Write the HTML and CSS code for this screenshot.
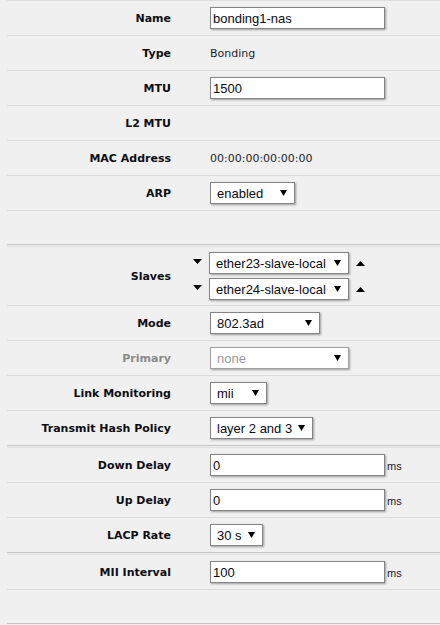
FILE: index.html
```html
<!DOCTYPE html>
<html>
<head>
<meta charset="utf-8">
<link rel="stylesheet" href="styles.css">
</head>
<body>
<div class="form">
  <div class="section">
    <div class="row">
      <div class="label">Name</div>
      <div class="value"><input class="text" type="text" value="bonding1-nas"></div>
    </div>
    <div class="row">
      <div class="label">Type</div>
      <div class="value"><span class="static">Bonding</span></div>
    </div>
    <div class="row">
      <div class="label">MTU</div>
      <div class="value"><input class="text" type="text" value="1500"></div>
    </div>
    <div class="row">
      <div class="label">L2 MTU</div>
      <div class="value"></div>
    </div>
    <div class="row">
      <div class="label">MAC Address</div>
      <div class="value"><span class="static">00:00:00:00:00:00</span></div>
    </div>
    <div class="row">
      <div class="label">ARP</div>
      <div class="value">
        <div class="select w-arp"><span>enabled</span><svg class="caret" width="7" height="6" viewBox="0 0 7 6"><polygon points="0,0 7,0 3.5,6"/></svg></div>
      </div>
    </div>
    <div class="row empty"></div>
  </div>

  <div class="section">
    <div class="row slaves">
      <div class="label">Slaves</div>
      <div class="value list">
        <div class="slave">
          <svg class="arrow" width="9" height="5" viewBox="0 0 9 5"><polygon points="0,0 9,0 4.5,5"/></svg>
          <div class="select w-slave"><span>ether23-slave-local</span><svg class="caret" width="7" height="6" viewBox="0 0 7 6"><polygon points="0,0 7,0 3.5,6"/></svg></div>
          <svg class="arrow up" width="9" height="5" viewBox="0 0 9 5"><polygon points="0,5 9,5 4.5,0"/></svg>
        </div>
        <div class="slave">
          <svg class="arrow" width="9" height="5" viewBox="0 0 9 5"><polygon points="0,0 9,0 4.5,5"/></svg>
          <div class="select w-slave"><span>ether24-slave-local</span><svg class="caret" width="7" height="6" viewBox="0 0 7 6"><polygon points="0,0 7,0 3.5,6"/></svg></div>
          <svg class="arrow up" width="9" height="5" viewBox="0 0 9 5"><polygon points="0,5 9,5 4.5,0"/></svg>
        </div>
      </div>
    </div>
    <div class="row">
      <div class="label">Mode</div>
      <div class="value">
        <div class="select w-mode"><span>802.3ad</span><svg class="caret" width="7" height="6" viewBox="0 0 7 6"><polygon points="0,0 7,0 3.5,6"/></svg></div>
      </div>
    </div>
    <div class="row disabled">
      <div class="label">Primary</div>
      <div class="value">
        <div class="select w-primary"><span>none</span><svg class="caret" width="7" height="6" viewBox="0 0 7 6"><polygon points="0,0 7,0 3.5,6"/></svg></div>
      </div>
    </div>
    <div class="row">
      <div class="label">Link Monitoring</div>
      <div class="value">
        <div class="select w-link"><span>mii</span><svg class="caret" width="7" height="6" viewBox="0 0 7 6"><polygon points="0,0 7,0 3.5,6"/></svg></div>
      </div>
    </div>
    <div class="row">
      <div class="label">Transmit Hash Policy</div>
      <div class="value">
        <div class="select w-hash"><span>layer 2 and 3</span><svg class="caret" width="7" height="6" viewBox="0 0 7 6"><polygon points="0,0 7,0 3.5,6"/></svg></div>
      </div>
    </div>
  </div>

  <div class="section">
    <div class="row">
      <div class="label">Down Delay</div>
      <div class="value unit-field"><input class="text" type="text" value="0"><span class="unit">ms</span></div>
    </div>
    <div class="row">
      <div class="label">Up Delay</div>
      <div class="value unit-field"><input class="text" type="text" value="0"><span class="unit">ms</span></div>
    </div>
    <div class="row">
      <div class="label">LACP Rate</div>
      <div class="value">
        <div class="select w-lacp"><span>30 s</span><svg class="caret" width="7" height="6" viewBox="0 0 7 6"><polygon points="0,0 7,0 3.5,6"/></svg></div>
      </div>
    </div>
  </div>

  <div class="section">
    <div class="row">
      <div class="label">MII Interval</div>
      <div class="value unit-field"><input class="text" type="text" value="100"><span class="unit">ms</span></div>
    </div>
    <div class="row empty"></div>
  </div>
</div>
</body>
</html>
```

FILE: styles.css
```css
html, body {
  margin: 0;
  padding: 0;
}

body {
  background: #f0f0f0;
  font-family: "DejaVu Sans", Verdana, sans-serif;
  font-size: 11px;
  color: #111;
}

.form {
  margin-left: 7px;
}

.section {
  border-top: 1px solid #dedede;
  border-bottom: 1px solid #c4c4c4;
}

.section + .section {
  margin-top: 1px;
}

.row {
  display: grid;
  grid-template-columns: 164px 1fr;
  column-gap: 19px;
  align-items: center;
  height: 34px;
  border-bottom: 1px solid #dcdcdc;
}

.row:last-child {
  border-bottom: none;
}

.row.empty {
  height: 33px;
}

.row.slaves {
  height: 58px;
}

.label {
  text-align: right;
  font-weight: bold;
  font-size: 11px;
  color: #0d0d14;
}

.disabled .label {
  color: #8a8a8a;
}

.value {
  padding-left: 20px;
  display: flex;
  align-items: center;
}

.static {
  font-size: 11px;
  color: #1e1e2a;
}

.text {
  box-sizing: border-box;
  width: 175px;
  height: 22px;
  margin: 0;
  padding: 0 2px;
  border: 1px solid #858585;
  background: #fff;
  box-shadow: 1px 1px 2px rgba(0, 0, 0, 0.35);
  font-family: "Liberation Sans", Arial, sans-serif;
  font-size: 13px;
  color: #0a0a14;
  outline: none;
}

.unit-field {
  align-items: baseline;
}

.unit {
  margin-left: 2px;
  font-family: "Liberation Sans", Arial, sans-serif;
  font-size: 11px;
  color: #1a1a2a;
}

.select {
  box-sizing: border-box;
  height: 22px;
  display: flex;
  align-items: center;
  justify-content: space-between;
  padding: 0 7px 0 6px;
  border: 1px solid #858585;
  background: #fff;
  box-shadow: 1px 1px 2px rgba(0, 0, 0, 0.35);
  font-family: "Liberation Sans", Arial, sans-serif;
  font-size: 13px;
  color: #0a0a14;
  white-space: nowrap;
}

.caret {
  display: block;
  fill: #000;
  flex: none;
}

.disabled .select {
  color: #999;
  border-color: #a0a0a0;
}

.w-arp { width: 85px; }
.w-slave { width: 140px; }
.w-mode { width: 110px; }
.w-primary { width: 139px; }
.w-link { width: 57px; }
.w-hash { width: 103px; }
.w-lacp { width: 53px; }

.value.list {
  padding-left: 3px;
  flex-direction: column;
  align-items: flex-start;
  gap: 4px;
}

.slave {
  display: flex;
  align-items: center;
}

.arrow {
  display: block;
  fill: #000;
  flex: none;
}

.slave .arrow {
  margin-right: 7px;
  margin-top: -3px;
}

.slave .arrow.up {
  margin-right: 0;
  margin-left: 7px;
  margin-top: 1px;
}
```
